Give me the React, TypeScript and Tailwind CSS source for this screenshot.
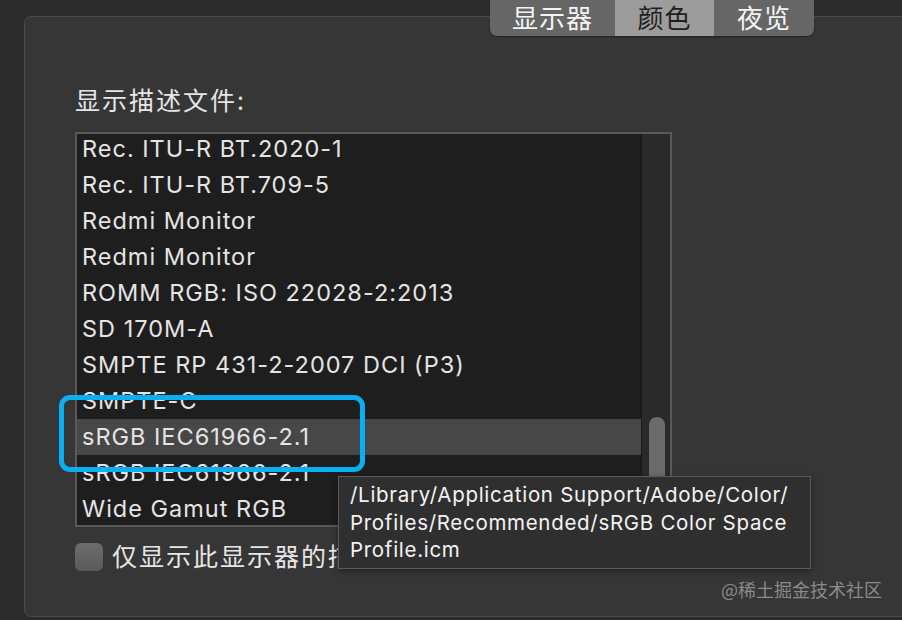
import React from "react";

const rows = [
  "Rec. ITU-R BT.2020-1",
  "Rec. ITU-R BT.709-5",
  "Redmi Monitor",
  "Redmi Monitor",
  "ROMM RGB: ISO 22028-2:2013",
  "SD 170M-A",
  "SMPTE RP 431-2-2007 DCI (P3)",
  "SMPTE-C",
  "sRGB IEC61966-2.1",
  "sRGB IEC61966-2.1",
  "Wide Gamut RGB",
];

const latin = { fontFamily: '"Inter", "Noto Sans CJK SC", sans-serif' };
const cjk = { fontFamily: '"Noto Sans CJK SC", "Inter", sans-serif' };

export default function App() {
  return (
    <div className="relative w-[902px] h-[620px] overflow-hidden bg-[#2c2c2c]" style={latin}>
      {/* panel */}
      <div className="ml-[24px] mt-[16px] w-[900px] h-[601px] rounded-[7px] border border-[#4b4b4b] bg-[#363636] pl-[50px] pt-[66px]">
        <div className="text-[25px] leading-[32px] tracking-[2px] text-[#e6e6e6]" style={cjk}>
          显示描述文件:
        </div>
        <div className="mt-[17px] flex w-[597px] h-[395px] border-2 border-[#595959] bg-[#1e1e1e]">
          <div className="flex-1 overflow-hidden">
            <div className="-mt-[3px]">
              {rows.map((r, i) => (
                <div
                  key={i}
                  className={`h-[36px] pl-[5px] text-[23.5px] leading-[36px] tracking-[1px] text-[#e4e4e4] whitespace-nowrap ${
                    i === 8 ? "bg-[#474747]" : ""
                  }`}
                >
                  {r}
                </div>
              ))}
            </div>
          </div>
          <div className="w-[29px] h-full border-l border-[#161616] bg-[#2a2a2a] pt-[283px] pl-[7px]">
            <div className="w-[16px] h-[106px] rounded-full bg-[#6b6b6b]" />
          </div>
        </div>
        <div className="mt-[16px] flex items-center gap-[9px]">
          <div className="w-[28px] h-[28px] rounded-[6px] bg-gradient-to-b from-[#6c6c6c] to-[#5a5a5a]" />
          <div className="-mt-[4px] text-[25px] leading-[30px] tracking-[2px] text-[#e6e6e6]" style={cjk}>
            仅显示此显示器的描述文件
          </div>
        </div>
      </div>

      {/* tabs */}
      <div className="absolute left-[490px] top-0 flex h-[36px] w-[324px] overflow-hidden rounded-b-[7px] bg-[#666666] shadow-[0_1px_2px_rgba(0,0,0,0.4)]" style={cjk}>
        <div className="flex w-[125px] items-center justify-center pb-[4px] text-[26px] tracking-[1px] text-[#f4f4f4]">显示器</div>
        <div className="flex w-[99px] items-center justify-center bg-[#9c9c9c] pb-[4px] text-[26px] tracking-[1px] text-[#1e1e1e]">颜色</div>
        <div className="flex w-[100px] items-center justify-center pb-[4px] text-[26px] tracking-[1px] text-[#f4f4f4]">夜览</div>
      </div>

      {/* highlight box */}
      <div className="absolute left-[59px] top-[395px] w-[306px] h-[77px] rounded-[11px] border-[5px] border-[#0aaff2]" />

      {/* tooltip */}
      <div className="absolute left-[338px] top-[476px] w-[473px] h-[93px] border border-[#5a5a5a] bg-[#2f2f2f] pl-[11px] pt-[4px] text-[20.5px] leading-[27.5px] tracking-[0.7px] text-[#f3f3f3] shadow-[0_2px_6px_rgba(0,0,0,0.4)]">
        <div>/Library/Application Support/Adobe/Color/</div>
        <div>Profiles/Recommended/sRGB Color Space</div>
        <div>Profile.icm</div>
      </div>

      {/* watermark */}
      <div className="absolute right-[20px] top-[577px] text-[18px] leading-[24px] text-[#8a8a8a]" style={cjk}>
        @稀土掘金技术社区
      </div>
    </div>
  );
}
